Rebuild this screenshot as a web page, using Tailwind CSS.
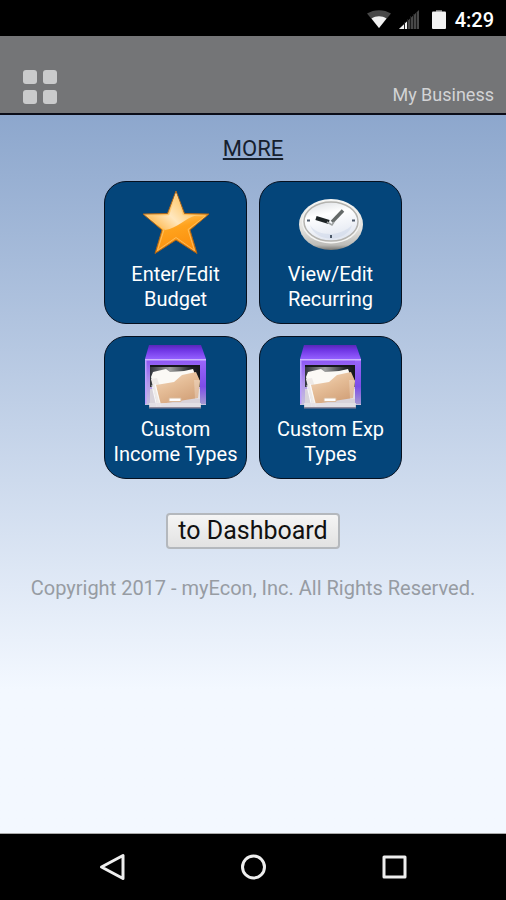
<!DOCTYPE html>
<html lang="en">
  <head>
    <meta charset="UTF-8" />
    <meta name="viewport" content="width=device-width, initial-scale=1.0" />
    <title>My Business</title>
    <script src="https://cdn.jsdelivr.net/npm/@tailwindcss/browser@4"></script>
  </head>
  <body class="flex min-h-screen flex-col bg-black font-[Roboto,sans-serif]">
    <!-- Status bar -->
    <div class="flex h-9 items-center justify-end pt-1 pr-3 text-white">
      <svg class="mr-2 h-5 w-6" viewBox="0 0 24 20">
        <path d="M0 3.5C7-1 17-1 24 3.500L12 18z" fill="#484848" />
        <path d="M4.500 8.500C9 5.500 15 5.500 19.500 8.500L12 18z" fill="#f2f2f2" />
      </svg>
      <svg class="mr-3 h-5 w-5" viewBox="0 0 20 20">
        <path d="M20 0v19H0z" fill="#484848" />
        <path d="M8 11.500V19H0z" fill="#f2f2f2" />
        <path d="M5.500 12v7M8.500 9v10M11.500 6v13M14.500 4v15M17.500 2v17" stroke="#1c1c1c" stroke-width="1" />
      </svg>
      <svg class="mr-2 h-5 w-4" viewBox="0 0 16 20">
        <path d="M5 0h6v2H5z" fill="#777" />
        <rect x="1" y="1.500" width="14" height="17.500" rx="1" fill="#f2f2f2" />
      </svg>
      <span class="text-xl font-medium">4:29</span>
    </div>

    <!-- Header -->
    <header class="flex h-[79px] items-end justify-between border-b-2 border-[#0b0d18] bg-[#747577] pr-3 pb-2 pl-[22px]">
      <button type="button" aria-label="Menu">
        <svg class="h-9 w-9" viewBox="0 0 36 36" fill="#cacbcc">
          <rect x="1" y="1" width="14" height="14" rx="3" />
          <rect x="21" y="1" width="14" height="14" rx="3" />
          <rect x="1" y="21" width="14" height="14" rx="3" />
          <rect x="21" y="21" width="14" height="14" rx="3" />
        </svg>
      </button>
      <span class="text-lg leading-5 text-[#d2d3d5]">My Business</span>
    </header>

    <!-- Content -->
    <main class="flex grow flex-col items-center border-b border-[#aaa] bg-linear-to-b from-[#8da7cd] to-[#f3f8ff] to-80% pt-5">
      <h1 class="text-[22px] leading-7 text-[#16202e] underline underline-offset-2">MORE</h1>

      <div class="mt-[18px] grid grid-cols-[143px_143px] gap-3 text-xl leading-[25px] text-white">
        <a href="#budget" class="flex h-[143px] flex-col items-center rounded-[22px] border border-[#06101f] bg-[#04457a] pt-2 text-center">
          <svg class="mb-2 h-16 w-[70px] shrink-0" viewBox="0 0 70 64">
            <defs>
              <linearGradient id="star" x1="0.3" y1="0" x2="0.6" y2="1">
                <stop offset="0.1" stop-color="#ffd493" />
                <stop offset="0.45" stop-color="#ffb84a" />
                <stop offset="0.6" stop-color="#ffa21c" />
                <stop offset="1" stop-color="#fb8c0c" />
              </linearGradient>
              <linearGradient id="shine" x1="0" y1="0.8" x2="0.8" y2="0.2">
                <stop offset="0" stop-color="#ffb74a" />
                <stop offset="0.5" stop-color="#ffeccb" />
                <stop offset="1" stop-color="#ffc766" />
              </linearGradient>
            </defs>
            <path d="M35 1l8.500 22.500L68 24 49 40l7 23.500L35 50 14 63.500 21 40 2 24l24.500-.5z" fill="url(#star)" stroke="#a9641a" stroke-width="1" stroke-linejoin="round" />
            <path d="M35 5l7 20 13 .5C44 28 37 38 24 40L7 26l21-1z" fill="url(#shine)" opacity="0.9" />
            <path d="M35 4l7.500 21 22 1-17.500 13.500 6.500 21L35 47.500 16.500 60.500l6.500-21L6 26l22-1z" fill="none" stroke="#ffd488" stroke-width="1" opacity="0.6" />
          </svg>
          Enter/Edit<br />Budget
        </a>
        <a href="#recurring" class="flex h-[143px] flex-col items-center rounded-[22px] border border-[#06101f] bg-[#04457a] pt-2 text-center">
          <svg class="mb-2 h-16 w-16 shrink-0" viewBox="0 0 64 64">
            <defs>
              <linearGradient id="rim" x1="0" y1="0" x2="0" y2="1">
                <stop offset="0" stop-color="#f7f7f5" />
                <stop offset="0.6" stop-color="#e2e1dd" />
                <stop offset="0.9" stop-color="#bdbcb8" />
                <stop offset="1" stop-color="#777672" />
              </linearGradient>
              <linearGradient id="face" x1="0" y1="0" x2="0.3" y2="1">
                <stop offset="0" stop-color="#d9dce0" />
                <stop offset="0.4" stop-color="#ffffff" />
                <stop offset="1" stop-color="#e3e8f2" />
              </linearGradient>
            </defs>
            <ellipse cx="32" cy="34.500" rx="32" ry="25.500" fill="url(#rim)" />
            <ellipse cx="32" cy="32" rx="29" ry="21.500" fill="#f4f4f2" />
            <ellipse cx="32" cy="31.500" rx="27" ry="19.500" fill="url(#face)" stroke="#b4b3af" stroke-width="1.500" />
            <path d="M11 35c6 11 30 13 42 0-4 17-36 19-42 0z" fill="#ccd5e8" opacity="0.5" />
            <path d="M17 28l13 4" stroke="#1d2325" stroke-width="4" />
            <path d="M33 32l11-11.500" stroke="#656a69" stroke-width="3.500" />
            <path d="M28 32l5 3 2-3" fill="none" stroke="#9da1a1" stroke-width="1.500" />
            <path d="M8 30.500h3M53 30.500h3M32 45v3" stroke="#4d5969" stroke-width="2" />
          </svg>
          View/Edit<br />Recurring
        </a>
        <a href="#income-types" class="flex h-[143px] flex-col items-center rounded-[22px] border border-[#06101f] bg-[#04457a] pt-2 text-center">
          <svg class="mb-2 h-16 w-16 shrink-0" viewBox="0 0 64 64">
            <defs>
              <linearGradient id="top" x1="0" y1="0" x2="0" y2="1">
                <stop offset="0" stop-color="#5a26b8" />
                <stop offset="0.4" stop-color="#7238e6" />
                <stop offset="1" stop-color="#9460ff" />
              </linearGradient>
              <linearGradient id="front" x1="0" y1="0" x2="0" y2="1">
                <stop offset="0" stop-color="#8b52f5" />
                <stop offset="0.5" stop-color="#b095ea" />
                <stop offset="1" stop-color="#c9c3dc" />
              </linearGradient>
              <linearGradient id="side" x1="0" y1="0" x2="0" y2="1">
                <stop offset="0" stop-color="#9a66fb" />
                <stop offset="0.6" stop-color="#7d4de8" />
                <stop offset="1" stop-color="#a398d2" />
              </linearGradient>
              <linearGradient id="folder" x1="0" y1="0" x2="0.6" y2="1">
                <stop offset="0" stop-color="#f5dcc4" />
                <stop offset="0.5" stop-color="#e5bd97" />
                <stop offset="1" stop-color="#d3a27a" />
              </linearGradient>
              <linearGradient id="inside" x1="0" y1="0" x2="1" y2="0">
                <stop offset="0" stop-color="#30333a" />
                <stop offset="0.4" stop-color="#9fa09f" />
                <stop offset="0.8" stop-color="#25282c" />
                <stop offset="1" stop-color="#14161a" />
              </linearGradient>
              <symbol id="cabinet" viewBox="0 0 64 64">
                <path d="M5 0h52l5 14H1z" fill="url(#top)" />
                <path d="M1 14h61v46H1z" fill="url(#front)" />
                <path d="M56 15h6v44h-6z" fill="url(#side)" />
                <path d="M1 14h61v1.500H1z" fill="#cdb6ff" />
                <path d="M1 15h1.500v44H1z" fill="#bb9dff" />
                <path d="M6 20h50v22H6z" fill="url(#inside)" />
                <path d="M6 20h50v2H6z" fill="#15171b" />
                <path d="M6 44h50v19H6z" fill="#d8d3da" />
                <path d="M7 32l2-5 13-3 4 3 14-1 9-2 3 8 2 14-40 15z" fill="#fbf9f5" />
                <path d="M7 34l7 27 8-2-9-26z" fill="#eeeae7" />
                <path d="M12 40l18-3 8-7 14-3 4 9-2 17-38 6z" fill="url(#folder)" />
                <path d="M8 40l5 22M11 39l6 23" stroke="#ffffff" stroke-width="1.200" opacity="0.8" />
                <path d="M50 35h6v19h-5z" fill="#ffffff" opacity="0.25" />
                <path d="M5 58h52v5H5z" fill="#e4e0e5" opacity="0.85" />
                <path d="M5 62h52v1.500H5z" fill="#8e8899" />
                <path d="M25 53h12v3.500H25z" fill="#ffffff" stroke="#d9b899" stroke-width="1" />
              </symbol>
            </defs>
            <use href="#cabinet" />
          </svg>
          Custom<br />Income Types
        </a>
        <a href="#expense-types" class="flex h-[143px] flex-col items-center rounded-[22px] border border-[#06101f] bg-[#04457a] pt-2 text-center">
          <svg class="mb-2 h-16 w-16 shrink-0" viewBox="0 0 64 64">
            <use href="#cabinet" />
          </svg>
          Custom Exp<br />Types
        </a>
      </div>

      <button type="button" class="mt-[34px] h-9 rounded-sm border-2 border-[#b4b8bd] bg-linear-to-b from-[#f5f5f5] to-[#e2e2e2] px-[10px] text-[25px] leading-8 text-[#111]">
        to Dashboard
      </button>

      <p class="mt-[27px] text-center text-xl leading-6 text-[#979ca3]">
        Copyright 2017 - myEcon, Inc. All Rights Reserved.
      </p>
    </main>

    <!-- Android navigation -->
    <nav class="grid h-[66px] grid-cols-3 items-center px-[42px]">
      <button type="button" aria-label="Back" class="justify-self-center">
        <svg class="h-7 w-7" viewBox="0 0 28 28" fill="none" stroke="#eee" stroke-width="3" stroke-linejoin="round">
          <path d="M25 2.500v23L3.500 14z" />
        </svg>
      </button>
      <button type="button" aria-label="Home" class="justify-self-center">
        <svg class="h-7 w-7" viewBox="0 0 28 28" fill="none" stroke="#eee" stroke-width="3">
          <circle cx="14.500" cy="14" r="11" />
        </svg>
      </button>
      <button type="button" aria-label="Recent apps" class="justify-self-center">
        <svg class="h-7 w-7" viewBox="0 0 28 28" fill="none" stroke="#eee" stroke-width="3" stroke-linejoin="round">
          <rect x="4" y="4" width="21" height="20" />
        </svg>
      </button>
    </nav>
  </body>
</html>
